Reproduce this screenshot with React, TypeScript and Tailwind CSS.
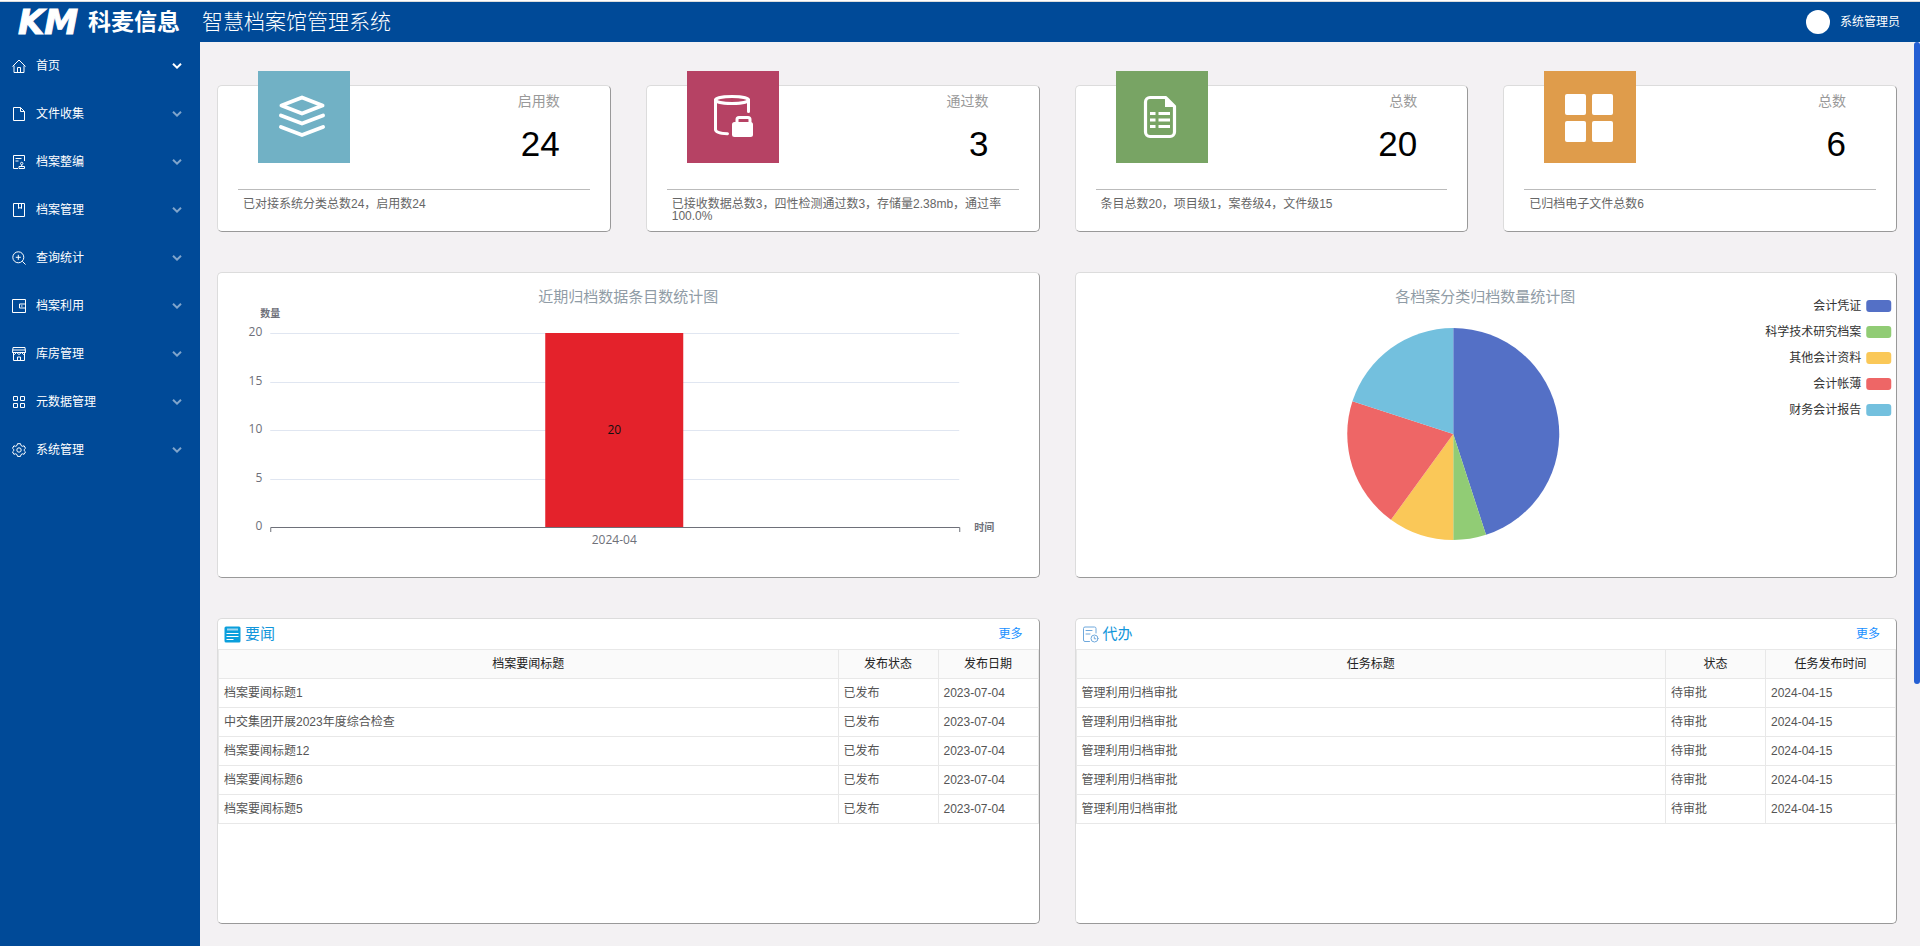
import React, { useState } from "react";

const menuItems = [
  {
    label: "首页",
    icon: (
      <path d="M.5 7.500 7 1l6.500 6.500M2 6.500v7h10v-7M5.500 13.500v-5h3v5" />
    ),
  },
  {
    label: "文件收集",
    icon: <path d="M1.500.5h7l4 4v9h-11zM8.500.5v4h4" />,
  },
  {
    label: "档案整编",
    icon: (
      <path d="M6 13.500H1.500V.5h11V6M3.500 3.500h6M3.500 6h3M7 13.500v-2h5.500v2zM9.700 11.500v-1.500M8.500 8.500a1.200 1.200 0 1 0 2.400 0a1.200 1.200 0 1 0-2.400 0" />
    ),
  },
  {
    label: "档案管理",
    icon: <path d="M1.500.5h11v13h-11zM6.500.5v5l1.500-1 1.500 1v-5" />,
  },
  {
    label: "查询统计",
    icon: (
      <>
        <circle cx="6.300" cy="6.300" r="5.500" />
        <path d="M10.300 10.300l3.200 3.200M6.300 3.800v5M3.800 6.300h5" />
      </>
    ),
  },
  {
    label: "档案利用",
    icon: <path d="M.5.5h13v13H.5zM13.500 5h-6v4h6M9 7h1.500" />,
  },
  {
    label: "库房管理",
    icon: (
      <path d="M1 .5h12l.5 5H.5zM.5 3h13M1.500 5.500v8h11v-8M.5 5.500l2 2 2-2 2.500 2 2.500-2 2 2 2-2M5.500 13.500v-3.500h3v3.500" />
    ),
  },
  {
    label: "元数据管理",
    icon: (
      <path d="M1.500 1.500h4v4h-4zM8.500 1.500h4v4h-4zM1.500 8.500h4v4h-4zM8.500 8.500h4v4h-4z" />
    ),
  },
  {
    label: "系统管理",
    icon: (
      <>
        <path d="M5.500.7h3l.5 1.800 1.300.8 1.800-.5 1.400 2.500L12.200 6.500v1.200l1.300 1.200-1.400 2.400-1.800-.5-1.300.8-.5 1.800h-3L5 11.600l-1.300-.8-1.800.5L.5 8.900l1.300-1.200V6.500L.5 5.300l1.400-2.500 1.800.5L5 2.500z" />
        <circle cx="7" cy="7" r="2.200" />
      </>
    ),
  },
];

const LayersIcon = () => (
  <svg viewBox="0 0 92 92" className="size-full" fill="none" stroke="#fff" strokeWidth="4" strokeLinejoin="round" strokeLinecap="round">
    <path d="M44 26.5 64.500 34.500 44 42.500 23.500 34.500z" />
    <path d="M23 44.500 44 52.500 65 44.500" />
    <path d="M23 56 44 64 65 56" />
  </svg>
);

const DatabaseLockIcon = () => (
  <svg viewBox="0 0 92 92" className="size-full" fill="none" stroke="#fff" strokeWidth="3" strokeLinecap="round">
    <ellipse cx="45" cy="29" rx="16.500" ry="3.500" />
    <path d="M28.500 29v29.500c0 2.500 5 4 12 4.300M61.500 29v11.500" />
    <rect x="45" y="51" width="21" height="15" rx="2.500" fill="#fff" stroke="none" />
    <path d="M50 52v-3.500a2 2 0 0 1 2-2h9a2 2 0 0 1 2 2V52" strokeLinecap="butt" />
  </svg>
);

const SheetIcon = () => (
  <svg viewBox="0 0 92 92" className="size-full" fill="none" stroke="#fff" strokeWidth="3.200">
    <path d="M49.500 26.500H34a4.500 4.500 0 0 0-4.500 4.500v30a4.500 4.500 0 0 0 4.500 4.500h20a4.500 4.500 0 0 0 4.500-4.500V35.500z" strokeLinejoin="round" />
    <path d="M49 26v10h10z" fill="#fff" stroke="none" />
    <path d="M34 42.500h5.500M42.500 42.500h11.500M34 49h5.500M42.500 49h11.500M34 55.500h5.500M42.500 55.500h11.500" />
  </svg>
);

const GridIcon = () => (
  <svg viewBox="0 0 92 92" className="size-full" fill="#fff">
    <rect x="21" y="23" width="21" height="21" rx="2" />
    <rect x="48" y="23" width="21" height="21" rx="2" />
    <rect x="21" y="50" width="21" height="21" rx="2" />
    <rect x="48" y="50" width="21" height="21" rx="2" />
  </svg>
);

const stats = [
  {
    label: "启用数",
    value: 24,
    color: "bg-[#71b1c5]",
    icon: LayersIcon,
    desc: "已对接系统分类总数24，启用数24",
  },
  {
    label: "通过数",
    value: 3,
    color: "bg-[#b64264]",
    icon: DatabaseLockIcon,
    desc: "已接收数据总数3，四性检测通过数3，存储量2.38mb，通过率100.0%",
  },
  {
    label: "总数",
    value: 20,
    color: "bg-[#78a464]",
    icon: SheetIcon,
    desc: "条目总数20，项目级1，案卷级4，文件级15",
  },
  {
    label: "总数",
    value: 6,
    color: "bg-[#df9c4b]",
    icon: GridIcon,
    desc: "已归档电子文件总数6",
  },
];

const pieData = [
  { name: "会计凭证", value: 9, color: "#5470c6" },
  { name: "科学技术研究档案", value: 1, color: "#91cc75" },
  { name: "其他会计资料", value: 2, color: "#fac858" },
  { name: "会计帐薄", value: 4, color: "#ee6666" },
  { name: "财务会计报告", value: 4, color: "#73c0de" },
];

const news = [
  ["档案要闻标题1", "已发布", "2023-07-04"],
  ["中交集团开展2023年度综合检查", "已发布", "2023-07-04"],
  ["档案要闻标题12", "已发布", "2023-07-04"],
  ["档案要闻标题6", "已发布", "2023-07-04"],
  ["档案要闻标题5", "已发布", "2023-07-04"],
];

const todos = Array.from({ length: 5 }, () => [
  "管理利用归档审批",
  "待审批",
  "2024-04-15",
]);

const card =
  "rounded-[5px] border border-t-[#dcdcdc] border-l-[#dcdcdc] border-r-[#999] border-b-[#999] bg-white";

const chartFont = "font-['Open_Sans','Noto_Sans_CJK_SC',sans-serif]";

function Header() {
  return (
    <header className="flex h-10 shrink-0 items-center bg-[#004a98] text-white">
      <div className="flex w-[200px] shrink-0 items-center pl-[18px]">
        <span className="w-[70px] font-['DejaVu_Sans',sans-serif] text-[34px] leading-10 font-bold italic [-webkit-text-stroke:1px_white]">
          KM
        </span>
        <span className="text-[23px] leading-10 font-bold whitespace-nowrap">
          科麦信息
        </span>
      </div>
      <h1 className="pl-[2px] text-[21px] leading-10 font-light">
        智慧档案馆管理系统
      </h1>
      <button className="mr-5 ml-auto flex items-center gap-2.5 text-xs">
        <span className="size-6 rounded-full bg-white" />
        系统管理员
      </button>
    </header>
  );
}

function Sidebar() {
  const [active, setActive] = useState("首页");

  return (
    <nav className="w-[200px] shrink-0 bg-[#004a98] text-xs text-white">
      {menuItems.map(({ label, icon }) => (
        <button
          key={label}
          onClick={() => setActive(label)}
          className="flex h-12 w-full items-center pr-[18px] pl-3"
        >
          <svg viewBox="0 0 14 14" className="size-3.5" fill="none" stroke="#fff">
            {icon}
          </svg>
          <span className="ml-2.5">{label}</span>
          <svg
            viewBox="0 0 10 6"
            className={`ml-auto h-1.5 w-2.5 ${
              active === label ? "opacity-100" : "opacity-50"
            }`}
            fill="none"
            stroke="#fff"
            strokeWidth="2"
          >
            <path d="M1 .8 5 4.600 9 .8" />
          </svg>
        </button>
      ))}
    </nav>
  );
}

function StatCard({ label, value, color, icon: Icon, desc }: any) {
  return (
    <div className={`h-[147px] ${card}`}>
      <div className="flex h-[103px] justify-between pr-[50px] pl-10">
        <div className={`-mt-[15px] size-[92px] ${color}`}>
          <Icon />
        </div>
        <div className="pt-[5px] text-right">
          <p className="text-sm leading-5 text-[#999]">{label}</p>
          <p className="mt-[13px] text-[35px] leading-10 text-black">{value}</p>
        </div>
      </div>
      <p className="mx-5 border-t border-[#bbb] px-[5px] pt-2 text-xs leading-3 text-[#666]">
        {desc}
      </p>
    </div>
  );
}

function BarChart() {
  const ticks = [20, 15, 10, 5, 0];

  return (
    <div className={`h-[306px] ${card}`}>
      <svg viewBox="0 0 820 304" className={`h-full w-full text-xs ${chartFont}`}>
        <text x="410" y="29" textAnchor="middle" fontSize="15" fill="#909ca6">
          近期归档数据条目数统计图
        </text>
        <text x="52" y="44" textAnchor="middle" fontSize="10" fontWeight="bold" fill="#6e7079">
          数量
        </text>
        {ticks.map((t, i) => {
          const y = Math.round(60 + i * 48.5);
          return (
            <g key={t}>
              {t > 0 && <rect x="52" y={y} width="689" height="1" fill="#e0e6f1" />}
              <text x="44" y={y + 3} textAnchor="end" fill="#6e7079">
                {t}
              </text>
            </g>
          );
        })}
        <rect x="327" y="60" width="138" height="194" fill="#e4222b" />
        <path d="M52.500 259v-4.500h689v4.500" fill="none" stroke="#6e7079" />
        <text x="396" y="161" textAnchor="middle" fill="#111">
          20
        </text>
        <text x="396" y="271" textAnchor="middle" fill="#6e7079">
          2024-04
        </text>
        <text x="756" y="258" fontSize="10" fontWeight="bold" fill="#6e7079">
          时间
        </text>
      </svg>
    </div>
  );
}

function PieChart() {
  const total = pieData.reduce((sum, d) => sum + d.value, 0);
  const cx = 377;
  const cy = 161;
  const r = 106;
  let start = 0;

  const slices = pieData.map((d) => {
    const a0 = (start / total) * Math.PI * 2;
    start += d.value;
    const a1 = (start / total) * Math.PI * 2;
    const p = (a: number) => `${cx + r * Math.sin(a)} ${cy - r * Math.cos(a)}`;
    return { ...d, path: `M${cx} ${cy}L${p(a0)}A${r} ${r} 0 0 1 ${p(a1)}z` };
  });

  return (
    <div className={`h-[306px] ${card}`}>
      <svg viewBox="0 0 820 304" className={`h-full w-full text-xs ${chartFont}`}>
        <text x="409" y="29" textAnchor="middle" fontSize="15" fill="#909ca6">
          各档案分类归档数量统计图
        </text>
        {slices.map((s) => (
          <path key={s.name} d={s.path} fill={s.color} />
        ))}
        {pieData.map((d, i) => (
          <g key={d.name}>
            <text x="785" y={37 + i * 26} textAnchor="end" fill="#333">
              {d.name}
            </text>
            <rect x="790" y={27 + i * 26} width="25" height="12" rx="3" fill={d.color} />
          </g>
        ))}
      </svg>
    </div>
  );
}

const NewsIcon = () => (
  <svg viewBox="0 0 17 17" className="size-[17px]">
    <rect x=".5" y=".5" width="16" height="16" rx="1.500" fill="#0b9fdc" />
    <path d="M3 3.500h11" stroke="#9fd6f0" strokeWidth="2" />
    <path d="M2.500 7.500h12M2.500 10.500h12M2.500 13.500h7" stroke="#fff" />
  </svg>
);

const TodoIcon = () => (
  <svg viewBox="0 0 17 17" className="size-[17px]" fill="none" stroke="#6fa8dc" strokeLinecap="round">
    <path d="M7.500 15.500H3A1.500 1.500 0 0 1 1.500 14V2.500A1.500 1.500 0 0 1 3 1h9.500A1.500 1.500 0 0 1 14 2.500V7" />
    <path d="M4 4.500h6M4 8h4" />
    <circle cx="12.500" cy="12.500" r="3.500" />
    <path d="M12.300 10.800v2h1.500" />
  </svg>
);

function TablePanel({ title, icon: Icon, columns, widths, rows }: any) {
  return (
    <section className={`h-[306px] overflow-hidden ${card}`}>
      <div className="flex h-[30px] items-center pr-4 pl-1.5">
        <Icon />
        <h2 className="ml-1 text-[15px] leading-5 text-[#1296db]">{title}</h2>
        <a href="#" className="ml-auto text-xs text-[#1890ff]">
          更多
        </a>
      </div>
      <table className="w-full table-fixed border-separate border-spacing-0 border-t border-l border-[#e8e8e8] text-xs leading-4">
        <colgroup>
          {widths.map((w: string, i: number) => (
            <col key={i} className={w} />
          ))}
        </colgroup>
        <thead>
          <tr>
            {columns.map((c: string) => (
              <th
                key={c}
                className="h-[29px] border-r border-b border-[#e8e8e8] bg-[#fafafa] font-normal text-[#222]"
              >
                {c}
              </th>
            ))}
          </tr>
        </thead>
        <tbody>
          {rows.map((row: string[], i: number) => (
            <tr key={i}>
              {row.map((cell, j) => (
                <td
                  key={j}
                  className="h-[29px] border-r border-b border-[#e8e8e8] px-[5px] text-[#555]"
                >
                  {cell}
                </td>
              ))}
            </tr>
          ))}
        </tbody>
      </table>
    </section>
  );
}

export default function App() {
  return (
    <div
      lang="zh-CN"
      className="flex min-h-screen flex-col bg-[#f3f1f3] font-['Liberation_Sans','Noto_Sans_CJK_SC',sans-serif]"
    >
      <div className="h-0.5 shrink-0 border-b border-[#dcdcdc] bg-white" />
      <Header />
      <div className="flex flex-1">
        <Sidebar />
        <main className="flex min-w-0 flex-1 flex-col gap-10 px-[17px] pt-[43px] pb-[22px]">
          <div className="grid grid-cols-4 gap-[35px]">
            {stats.map((s, i) => (
              <StatCard key={i} {...s} />
            ))}
          </div>
          <div className="grid grid-cols-2 gap-[35px]">
            <BarChart />
            <PieChart />
          </div>
          <div className="grid grid-cols-2 gap-[35px]">
            <TablePanel
              title="要闻"
              icon={NewsIcon}
              columns={["档案要闻标题", "发布状态", "发布日期"]}
              widths={["", "w-[100px]", "w-[100px]"]}
              rows={news}
            />
            <TablePanel
              title="代办"
              icon={TodoIcon}
              columns={["任务标题", "状态", "任务发布时间"]}
              widths={["", "w-[100px]", "w-[130px]"]}
              rows={todos}
            />
          </div>
        </main>
        {/* Scrollbar */}
        <div className="w-1.5 shrink-0">
          <div className="h-[71%] rounded-[3px] bg-[#245fd3]" />
        </div>
      </div>
    </div>
  );
}
